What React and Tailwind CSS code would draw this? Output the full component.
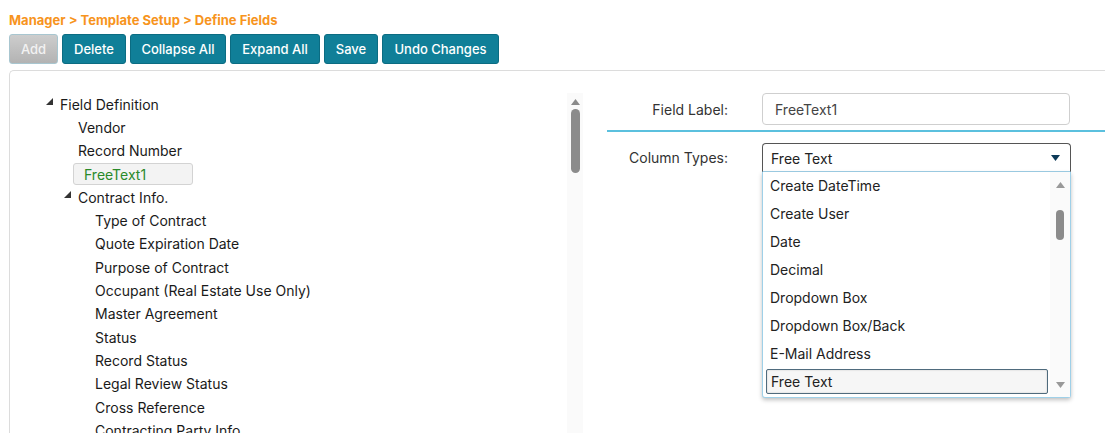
import React from "react";

const buttons = [
  { label: "Add", w: "w-[49px]", disabled: true },
  { label: "Delete", w: "w-[64px]" },
  { label: "Collapse All", w: "w-[96px]" },
  { label: "Expand All", w: "w-[90px]" },
  { label: "Save", w: "w-[54px]" },
  { label: "Undo Changes", w: "w-[117px]" },
];

// tree rows: kind = branch | leaf | selected
const tree = [
  { text: "Field Definition", kind: "branch", pad: "pl-[34px]" },
  { text: "Vendor", kind: "leaf", pad: "pl-[68px]" },
  { text: "Record Number", kind: "leaf", pad: "pl-[68px]" },
  { text: "FreeText1", kind: "selected", pad: "pl-[63px]" },
  { text: "Contract Info.", kind: "branch", pad: "pl-[52px]" },
  { text: "Type of Contract", kind: "leaf", pad: "pl-[85px]" },
  { text: "Quote Expiration Date", kind: "leaf", pad: "pl-[85px]" },
  { text: "Purpose of Contract", kind: "leaf", pad: "pl-[85px]" },
  { text: "Occupant (Real Estate Use Only)", kind: "leaf", pad: "pl-[85px]" },
  { text: "Master Agreement", kind: "leaf", pad: "pl-[85px]" },
  { text: "Status", kind: "leaf", pad: "pl-[85px]" },
  { text: "Record Status", kind: "leaf", pad: "pl-[85px]" },
  { text: "Legal Review Status", kind: "leaf", pad: "pl-[85px]" },
  { text: "Cross Reference", kind: "leaf", pad: "pl-[85px]" },
  { text: "Contracting Party Info", kind: "leaf", pad: "pl-[85px]" },
];

const columnTypes = [
  "Create DateTime",
  "Create User",
  "Date",
  "Decimal",
  "Dropdown Box",
  "Dropdown Box/Back",
  "E-Mail Address",
  "Free Text",
];

function Expander() {
  return (
    <span className="w-[16px] flex items-center">
      <svg width="7" height="7" viewBox="0 0 7 7" className="ml-[2px] -mt-[5px]">
        <polygon points="7,0 7,7 0,7" fill="#333" />
      </svg>
    </span>
  );
}

function Arrow({ up, color = "#9a9a9a" }) {
  return (
    <svg width="9" height="6" viewBox="0 0 9 6">
      <polygon points={up ? "4.5,0 9,6 0,6" : "0,0 9,0 4.5,6"} fill={color} />
    </svg>
  );
}

function TreeRow({ row }) {
  if (row.kind === "selected") {
    return (
      <div className={`h-[23.3px] flex items-center ${row.pad}`}>
        <span className="w-[120px] h-[22px] flex items-center pl-[10px] border border-[#d3d3d3] rounded-[3px] bg-[#f3f3f3] text-[#2a8a2a]">
          {row.text}
        </span>
      </div>
    );
  }
  return (
    <div className={`h-[23.3px] flex items-center ${row.pad}`}>
      {row.kind === "branch" && <Expander />}
      <span className="whitespace-nowrap">{row.text}</span>
    </div>
  );
}

export default function App() {
  return (
    <div className="w-[1105px] h-[433px] overflow-hidden bg-white text-[#1f1f1f] font-['Inter',sans-serif]">
      <div className="pt-[12px] pl-[9px] text-[13px] leading-[16px] font-bold text-[#f7941d]">
        Manager &gt; Template Setup &gt; Define Fields
      </div>

      <div className="mt-[6px] pl-[9px] flex gap-[4px]">
        {buttons.map((b) => (
          <button
            key={b.label}
            className={`${b.w} h-[30px] pt-[1px] rounded-[3px] text-[13px] font-medium flex items-center justify-center ${
              b.disabled
                ? "bg-gradient-to-b from-[#cdcdcd] to-[#b3b3b3] border border-[#a8c6d0] text-[#f2f2f2]"
                : "bg-[#107f98] border border-[#0b6c82] text-white"
            }`}
          >
            {b.label}
          </button>
        ))}
      </div>

      <div className="mt-[6px] ml-[9px] h-[400px] border-l border-t border-[#dcdcdc] rounded-tl-[5px] flex">
        {/* tree */}
        <div className="w-[557px] shrink-0 pt-[21.5px] text-[14px] text-[#1a1a1a]">
          {tree.map((r) => (
            <TreeRow key={r.text} row={r} />
          ))}
        </div>
        <div className="mt-[22px] w-[16px] shrink-0 bg-[#fafafa] flex flex-col items-center">
          <div className="mt-[6px]">
            <Arrow up color="#8a8a8a" />
          </div>
          <div className="mt-[4px] w-[9px] h-[64px] rounded-full bg-[#8b8b8b]" />
        </div>

        {/* form */}
        <div className="ml-[24px] flex-1 min-w-0 pt-[22px] text-[14px] text-[#333]">
          <div className="flex items-center">
            <div className="w-[121px] shrink-0 text-right">Field Label:</div>
            <div className="ml-[34px] shrink-0 w-[308px] h-[32px] border border-[#cfcfcf] rounded-[4px] flex items-center pl-[12px] text-[#444]">
              FreeText1
            </div>
          </div>
          <div className="mt-[5px] h-[2px] bg-[#5bc0de]" />
          <div className="mt-[11px] flex items-center">
            <div className="w-[121px] shrink-0 text-right">Column Types:</div>
            <div className="ml-[34px] shrink-0 relative w-[309px]">
              <div className="h-[29px] pt-[1px] border border-[#555] border-b-[#9fd0e8] rounded-t-[4px] flex items-center justify-between pl-[8px] pr-[10px] text-[#222]">
                <span>Free Text</span>
                <Arrow color="#0c3a58" />
              </div>
              <div className="absolute left-0 top-[29px] w-[309px] h-[226px] bg-white border border-t-0 border-[#9fd0e8] rounded-b-[3px] shadow-[0_2px_4px_rgba(0,0,0,0.25)] flex">
                <div className="flex-1 text-[#222]">
                  {columnTypes.map((t) =>
                    t === "Free Text" ? (
                      <div key={t} className="h-[27.9px] flex items-center pl-[3px]">
                        <div className="w-[282px] h-[25px] border border-[#4f6b7d] rounded-[2px] bg-[#f6f6f6] shadow-[inset_0_0_2px_rgba(0,0,0,0.2)] flex items-center pl-[4px]">
                          {t}
                        </div>
                      </div>
                    ) : (
                      <div key={t} className="h-[27.9px] flex items-center pl-[7px]">
                        {t}
                      </div>
                    )
                  )}
                </div>
                <div className="w-[20px] bg-[#fafafa] flex flex-col items-center">
                  <div className="mt-[10px]">
                    <Arrow up color="#999" />
                  </div>
                  <div className="mt-[22px] w-[8px] h-[30px] rounded-full bg-[#8b8b8b]" />
                  <div className="mt-auto mb-[9px]">
                    <Arrow color="#999" />
                  </div>
                </div>
              </div>
            </div>
          </div>
        </div>
      </div>
    </div>
  );
}
